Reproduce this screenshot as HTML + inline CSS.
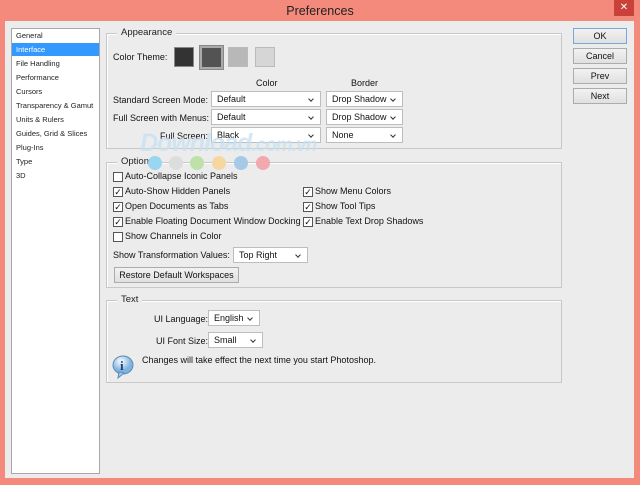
<!DOCTYPE html>
<html><head><meta charset="utf-8"><style>
*{margin:0;padding:0;box-sizing:border-box}
body{width:640px;height:485px;background:#f48a7c;font-family:"Liberation Sans",sans-serif;font-size:9px;color:#111;position:relative;overflow:hidden}
.a{position:absolute;white-space:nowrap}
.title{left:0;top:4px;width:640px;text-align:center;font-size:12.5px;color:#222}
.close{left:614px;top:0;width:20px;height:16px;background:#c9423a;color:#fff;text-align:center;font-size:10px;line-height:16px}
.body{left:5px;top:21px;width:629px;height:457px;background:#ececec}
.list{left:11px;top:28px;width:89px;height:446px;background:#fff;border:1px solid #a8a8a8}
.li{position:absolute;left:4px;font-size:7.5px;color:#222}
.sel{position:absolute;left:0;top:14px;width:87px;height:13px;background:#3399ff}
.grp{border:1px solid #c8c8c8;box-shadow:inset 1px 1px 0 #fff}
.lg{background:#ececec;padding:0 4px;font-size:9.5px;color:#222}
.dd{background:#fff;border:1px solid #bdbdbd;height:16px;padding:0 0 0 5px;font-size:9px;line-height:14px}
.dd:after{content:"";position:absolute;right:7px;top:5px;width:3px;height:3px;border-right:1px solid #333;border-bottom:1px solid #333;transform:rotate(45deg)}
.btn{background:linear-gradient(#f2f2f2,#e0e0e0);border:1px solid #acacac;height:16px;text-align:center;font-size:9px;line-height:14px}
.cb{width:10px;height:10px;border:1px solid #555;background:#fff;font-size:9px;line-height:8px;text-align:center}
.sw{width:20px;height:20px;border:1px solid #888}
</style></head><body>
<div class="a title">Preferences</div>
<div class="a close">✕</div>
<div class="a body"></div>
<div class="a list">
<div class="sel"></div>
<div class="li" style="top:2px">General</div>
<div class="li" style="top:16px;color:#fff">Interface</div>
<div class="li" style="top:30px">File Handling</div>
<div class="li" style="top:44px">Performance</div>
<div class="li" style="top:58px">Cursors</div>
<div class="li" style="top:72px">Transparency &amp; Gamut</div>
<div class="li" style="top:86px">Units &amp; Rulers</div>
<div class="li" style="top:100px">Guides, Grid &amp; Slices</div>
<div class="li" style="top:114px">Plug-Ins</div>
<div class="li" style="top:128px">Type</div>
<div class="li" style="top:142px">3D</div>
</div>

<div class="a grp" style="left:106px;top:33px;width:456px;height:116px"></div>
<div class="a lg" style="left:117px;top:27px">Appearance</div>
<div class="a" style="left:113px;top:52px">Color Theme:</div>
<div class="a sw" style="left:174px;top:47px;background:#333"></div>
<div class="a sw" style="left:200px;top:46px;width:23px;height:23px;background:#535353;border:2px solid #aaa;outline:1px solid #888"></div>
<div class="a sw" style="left:228px;top:47px;background:#b8b8b8;border-color:#bbb"></div>
<div class="a sw" style="left:255px;top:47px;background:#d6d6d6;border-color:#bbb"></div>
<div class="a" style="left:256px;top:78px">Color</div>
<div class="a" style="left:351px;top:78px">Border</div>
<div class="a" style="left:113px;top:95px">Standard Screen Mode:</div>
<div class="a" style="left:113px;top:113px">Full Screen with Menus:</div>
<div class="a" style="left:160px;top:131px">Full Screen:</div>
<div class="a dd" style="left:211px;top:91px;width:110px">Default</div>
<div class="a dd" style="left:211px;top:109px;width:110px">Default</div>
<div class="a dd" style="left:211px;top:127px;width:110px">Black</div>
<div class="a dd" style="left:326px;top:91px;width:77px">Drop Shadow</div>
<div class="a dd" style="left:326px;top:109px;width:77px">Drop Shadow</div>
<div class="a dd" style="left:326px;top:127px;width:77px">None</div>

<div class="a" style="left:140px;top:129px;font-size:25px;font-weight:bold;font-style:italic;color:#c6e0f2;opacity:.75;letter-spacing:-1px">Download<span style="font-size:19px">.com.vn</span></div>

<div class="a grp" style="left:106px;top:162px;width:456px;height:126px"></div>
<div class="a lg" style="left:117px;top:156px">Options</div>
<div class="a" style="left:148px;top:156px;width:14px;height:14px;border-radius:50%;background:#9ad5f2"></div>
<div class="a" style="left:169px;top:156px;width:14px;height:14px;border-radius:50%;background:#ddd"></div>
<div class="a" style="left:190px;top:156px;width:14px;height:14px;border-radius:50%;background:#bfe0a8"></div>
<div class="a" style="left:212px;top:156px;width:14px;height:14px;border-radius:50%;background:#f6d7a2"></div>
<div class="a" style="left:234px;top:156px;width:14px;height:14px;border-radius:50%;background:#a5c9e6"></div>
<div class="a" style="left:256px;top:156px;width:14px;height:14px;border-radius:50%;background:#f2a8ae"></div>
<div class="a cb" style="left:113px;top:172px"></div><div class="a" style="left:125px;top:171px">Auto-Collapse Iconic Panels</div>
<div class="a cb" style="left:113px;top:187px">✓</div><div class="a" style="left:125px;top:186px">Auto-Show Hidden Panels</div>
<div class="a cb" style="left:113px;top:202px">✓</div><div class="a" style="left:125px;top:201px">Open Documents as Tabs</div>
<div class="a cb" style="left:113px;top:217px">✓</div><div class="a" style="left:125px;top:216px">Enable Floating Document Window Docking</div>
<div class="a cb" style="left:113px;top:232px"></div><div class="a" style="left:125px;top:231px">Show Channels in Color</div>
<div class="a cb" style="left:303px;top:187px">✓</div><div class="a" style="left:315px;top:186px">Show Menu Colors</div>
<div class="a cb" style="left:303px;top:202px">✓</div><div class="a" style="left:315px;top:201px">Show Tool Tips</div>
<div class="a cb" style="left:303px;top:217px">✓</div><div class="a" style="left:315px;top:216px">Enable Text Drop Shadows</div>
<div class="a" style="left:113px;top:250px">Show Transformation Values:</div>
<div class="a dd" style="left:233px;top:247px;width:75px">Top Right</div>
<div class="a btn" style="left:114px;top:267px;width:125px">Restore Default Workspaces</div>

<div class="a grp" style="left:106px;top:300px;width:456px;height:83px"></div>
<div class="a lg" style="left:117px;top:294px">Text</div>
<div class="a" style="left:154px;top:314px">UI Language:</div>
<div class="a dd" style="left:208px;top:310px;width:52px">English</div>
<div class="a" style="left:156px;top:336px">UI Font Size:</div>
<div class="a dd" style="left:208px;top:332px;width:55px">Small</div>
<svg class="a" style="left:111px;top:355px" width="26" height="24" viewBox="0 0 26 24"><defs><radialGradient id="g" cx="40%" cy="30%"><stop offset="0" stop-color="#fff"/><stop offset="1" stop-color="#7fb3dd"/></radialGradient></defs><ellipse cx="12" cy="10" rx="10" ry="9" fill="url(#g)" stroke="#5a8cbb"/><path d="M8 17 L7 23 L13 18Z" fill="#a9cbea" stroke="#5a8cbb"/><text x="9" y="15" font-family="Liberation Serif" font-weight="bold" font-size="13" fill="#1a3f7a">i</text></svg>
<div class="a" style="left:142px;top:355px">Changes will take effect the next time you start Photoshop.</div>

<div class="a btn" style="left:573px;top:28px;width:54px;border-color:#7aa7d9">OK</div>
<div class="a btn" style="left:573px;top:48px;width:54px">Cancel</div>
<div class="a btn" style="left:573px;top:68px;width:54px">Prev</div>
<div class="a btn" style="left:573px;top:88px;width:54px">Next</div>
</body></html>
